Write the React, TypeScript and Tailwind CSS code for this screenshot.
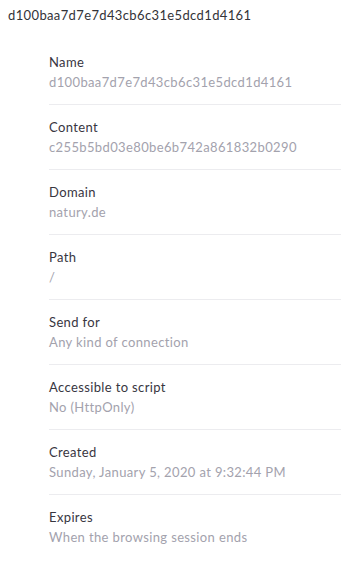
import React from "react";

const rows: [string, string][] = [
  ["Name", "d100baa7d7e7d43cb6c31e5dcd1d4161"],
  ["Content", "c255b5bd03e80be6b742a861832b0290"],
  ["Domain", "natury.de"],
  ["Path", "/"],
  ["Send for", "Any kind of connection"],
  ["Accessible to script", "No (HttpOnly)"],
  ["Created", "Sunday, January 5, 2020 at 9:32:44 PM"],
  ["Expires", "When the browsing session ends"],
];

export default function App() {
  return (
    <div className="w-[341px] h-[570px] bg-white overflow-hidden font-['Lato',sans-serif] text-[13px] leading-[20px] tracking-[0.37px]">
      <div className="pl-2 pt-[5px] text-[#333338]">d100baa7d7e7d43cb6c31e5dcd1d4161</div>
      <div className="pl-[49px] mt-[15px]">
        {rows.map(([k, v], i) => (
          <div key={k} className={`pt-3 pb-3 ${i > 0 ? "border-t border-[#ececef]" : ""}`}>
            <div className="text-[#38363f]">{k}</div>
            <div className="text-[#a3a2ad]">{v}</div>
          </div>
        ))}
      </div>
    </div>
  );
}
